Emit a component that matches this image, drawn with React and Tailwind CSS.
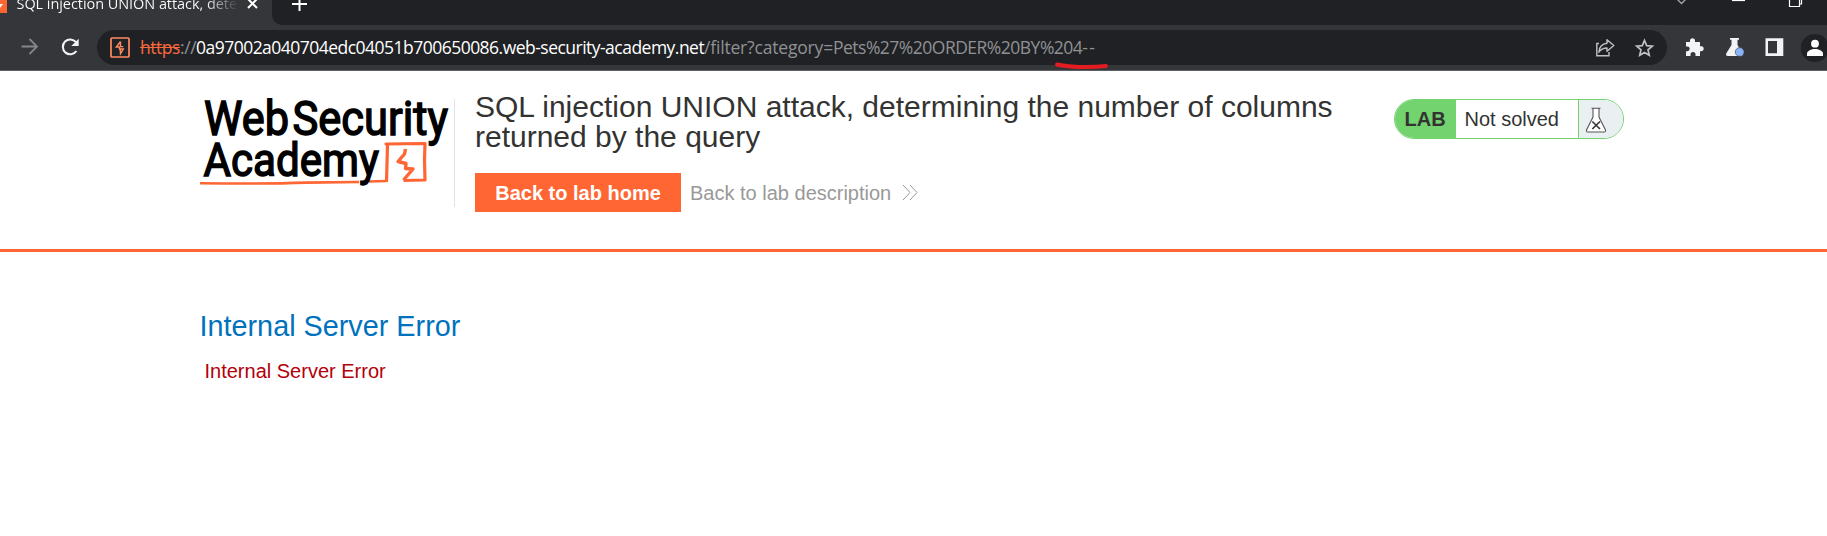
import React from "react";

function PageTab() {
  return (
    <div className="flex h-[25px] bg-[#202124] text-white">
      <div className="flex w-[272px] shrink-0 bg-[#35363a]">
        <svg className="h-[13px] w-[7px] shrink-0" viewBox="0 0 7 13">
          <rect width="7" height="13" fill="#ff6633" />
          <path d="M0 4H3L0 8Z" fill="#fff" />
        </svg>
        <div className="ml-[9.5px] h-[14px] w-[222px] overflow-hidden whitespace-nowrap bg-gradient-to-r from-white from-85% to-[#35363a] bg-clip-text font-['Open_Sans','Noto_Sans',sans-serif] text-[14.5px] leading-[7px] tracking-[-0.06px] text-transparent">
          <span className="-mt-px inline-block">SQL injection UNION attack, determining</span>
        </div>
        <svg className="ml-[8px] h-[9px] w-[11px]" viewBox="0 0 11 9">
          <path d="M1 -1L10 8M10 -1L1 8" stroke="#fff" strokeWidth="2" />
        </svg>
      </div>
      <div className="flex grow bg-[#35363a]">
        <div className="flex grow rounded-bl-[10px] bg-[#202124]">
          <svg className="ml-[20px] h-[12px] w-[16px]" viewBox="0 0 16 12">
            <path d="M7.5 0V11M0 4H15" stroke="#fff" strokeWidth="2" />
          </svg>
          <svg className="ml-auto h-[8px] w-[151px]" viewBox="1676 0 151 8" fill="none" stroke="#fff">
            <path d="M1677 -1L1681.5 3.5L1686 -1" stroke="#aaa" strokeWidth="1.3" />
            <path d="M1732 .3H1745" strokeWidth="1.6" />
            <path d="M1789.5 -2V6.5H1799.5V-2M1801.5 -2V4H1800" strokeWidth="1.2" />
          </svg>
        </div>
      </div>
    </div>
  );
}

function Toolbar() {
  return (
    <div className="flex h-[46px] items-start overflow-hidden border-b border-[#5f6065] bg-[#35363a] pt-[5px]">
      <svg className="h-[35px] w-[97px] shrink-0" viewBox="0 30 97 35" fill="none">
        <path d="M21.5 46.5H37M29.5 39L37 46.5L29.5 54" stroke="#85868a" strokeWidth="1.8" />
        <path d="M76 42.2A7.4 7.4 0 1 0 76.4 51" stroke="#f1f3f4" strokeWidth="2.1" />
        <path d="M78.7 38.8V46H71.3Z" fill="#f1f3f4" />
      </svg>
      <div className="flex h-[35px] w-[1570px] shrink-0 items-center rounded-full bg-[#202124] pl-[12.5px] font-['Open_Sans','Noto_Sans',sans-serif] text-[17.5px] whitespace-nowrap">
        <svg className="mr-[10.5px] h-[21px] w-[20px] shrink-0" viewBox="0 0 20 21" fill="none" stroke="#ff8a5f">
          <rect x="1" y="1" width="18" height="19" rx="1" strokeWidth="1.7" />
          <path d="M10.5 4.5L6.3 10H9.5V12H13.3L10.5 16.7L10.2 12.5M10.5 4.5V9.6H13.3" strokeWidth="1.4" />
        </svg>
        <span className="flex w-[56px] shrink-0 tracking-[-0.45px] text-[#8f9195]">
          <span className="text-[#f9693f] line-through">https</span>://
        </span>
        <span className="w-[508px] shrink-0 tracking-[-0.52px] text-white">0a97002a040704edc04051b700650086.web-security-academy.net</span>
        <span className="relative w-[392px] shrink-0 tracking-[-0.51px] text-[#8f9195]">
          <span className="tracking-[-0.18px]">/filter?category=</span>Pets%27%20ORDER%20BY%204<span className="tracking-[1.4px]">--</span>
          <svg className="absolute top-[28px] left-[350px] h-[8px] w-[56px]" viewBox="0 0 56 8" fill="none">
            <path d="M3 2.5C14 5 34 6 52 4" stroke="#e41b1f" strokeWidth="4" strokeLinecap="round" />
          </svg>
        </span>
        <svg className="mr-[12px] ml-auto h-[24px] w-[61px] shrink-0" viewBox="1594 36 61 24" fill="none" stroke="#bdc1c6">
          <path d="M1599 43.5H1596.8V55.7H1609V52" strokeWidth="1.4" />
          <path d="M1607 39.8L1613.8 45.5L1607 51.2V48C1603 48 1600.7 49.2 1598.8 52.2C1599.2 47 1602 43.8 1607 43.2Z" strokeWidth="1.4" strokeLinejoin="round" />
          <path d="M1644.5 40.5L1646.7 45.7L1652.3 46.2L1648 49.9L1649.3 55.3L1644.5 52.4L1639.7 55.3L1641 49.9L1636.7 46.2L1642.3 45.7Z" strokeWidth="1.7" />
        </svg>
      </div>
      <svg className="h-[35px] w-[160px] shrink-0" viewBox="1667 30 160 35">
        <path d="M1686 42H1690V40.7A2.5 2.5 0 0 1 1695 40.7V42H1700V46.3H1701.3A2.4 2.4 0 0 1 1701.3 51.2H1700V56H1695.5V54.5A2.5 2.5 0 0 0 1690.5 54.5V56H1686V51.2H1687.3A2.4 2.4 0 0 0 1687.3 46.4H1686Z" fill="#f1f3f4" />
        <path d="M1730 38H1739V39.7H1737.5V45L1742.5 53Q1744 56 1741 56H1728Q1725 56 1726.5 53L1731.5 45V39.7H1730Z" fill="#f1f3f4" />
        <circle cx="1739.7" cy="52" r="4.4" fill="#8ab4f8" stroke="#35363a" strokeWidth=".6" />
        <path fillRule="evenodd" d="M1765.5 38.3H1783.3V56H1765.5ZM1768 41V53.3H1777V41Z" fill="#f1f3f4" />
        <circle cx="1814.8" cy="48" r="14" fill="#202124" />
        <circle cx="1815" cy="43.7" r="3.9" fill="#fff" />
        <path d="M1807 56V53.5C1807 50.8 1811.5 49 1815 49S1823 50.8 1823 53.5V56Z" fill="#fff" />
      </svg>
    </div>
  );
}

function AcademyLogo() {
  return (
    <svg className="h-[108px] w-[254px] shrink-0 overflow-visible" viewBox="200 99 254 108">
      <g fill="none" stroke="#ff6633" strokeLinejoin="round">
        <path d="M200 183.2C222 183.5 267 184 306 182.6L359 182M369 181.5L386 181" strokeWidth="2.6" />
        <path d="M386.5 182L387.5 145L386 144L425 143.5L424.5 160L425 180L403.5 180.5" strokeWidth="3.2" />
        <path d="M405.5 149L404.5 154L398 161.5L406 163.5L405.5 168.5L413 169L403.5 180" strokeWidth="3.4" />
      </g>
      <g fill="#000" stroke="#000" strokeWidth="1.5" fontFamily="Roboto, sans-serif" fontWeight="400">
        <text x="204" y="135" fontSize="47.5" textLength="85" lengthAdjust="spacingAndGlyphs">Web</text>
        <text x="292.5" y="135" fontSize="47.5" textLength="155.5" lengthAdjust="spacingAndGlyphs">Security</text>
        <text x="203.5" y="175.8" fontSize="46" textLength="175.5" lengthAdjust="spacingAndGlyphs">Academy</text>
      </g>
    </svg>
  );
}

function LabStatus() {
  return (
    <div className="flex h-[40px] w-[230px] shrink-0 items-stretch overflow-hidden rounded-full border border-[#72d36f] bg-white text-[20px] leading-[38px] text-[#333332]">
      <span className="w-[61px] bg-[#72d36f] pl-[9.5px] font-bold">LAB</span>
      <span className="w-[122px] pl-[8.5px]">Not solved</span>
      <span className="grow border-l border-[#72d36f] bg-[#eaeff2]">
        <svg className="mt-[7px] ml-[6px] h-[26px] w-[22px]" viewBox="0 0 22 26" fill="none" stroke="#555">
          <path d="M8 1.5V10L1.5 23Q1 25 3 25H19Q21 25 20.5 23L14 10V1.5Z" fill="#fff" stroke="none" />
          <path d="M6.5 1.2H15.5M8 1.5V10L1.5 23Q1 25 3 25H19Q21 25 20.5 23L14 10V1.5" strokeWidth="1.1" />
          <path d="M7.3 14.5L15 22M15 14.5L7.3 22" stroke="#333" strokeWidth="1.6" />
        </svg>
      </span>
    </div>
  );
}

export default function App() {
  return (
    <div className="h-[536px] w-[1827px] overflow-hidden bg-white font-['Liberation_Sans',Arial,sans-serif]">
      <PageTab />
      <Toolbar />
      <header className="flex h-[181px] items-start border-b-3 border-[#ff6633] pt-[28px] pl-[200px]">
        <AcademyLogo />
        <div className="h-[108px] w-px bg-[#e3e3e3]" />
        <div className="-mt-[7px] ml-[20px] w-[919px] shrink-0">
          <h1 className="text-[30px] leading-[30px] whitespace-nowrap text-[#333332]">
            SQL injection UNION attack, determining the number of columns
            <br />
            returned by the query
          </h1>
          <div className="mt-[21px] flex items-center text-[20px]">
            <a className="flex h-[39px] w-[206px] items-center justify-center bg-[#ff6633] font-bold text-white">Back to lab home</a>
            <a className="ml-[9px] flex items-center text-[#999]">
              Back to lab description
              <svg className="ml-[11px] h-[17px] w-[16px]" viewBox="0 0 16 17" fill="none" stroke="#999">
                <path d="M1 1L8 8.5L1 16M8 1L15 8.5L8 16" />
              </svg>
            </a>
          </div>
        </div>
        <LabStatus />
      </header>
      <main className="pt-[58px] pl-[199.5px]">
        <h2 className="text-[28.8px] leading-[32px] text-[#0072bd]">Internal Server Error</h2>
        <p className="mt-[16px] ml-[5px] text-[20px] leading-[26px] text-[#b30009]">Internal Server Error</p>
      </main>
    </div>
  );
}
